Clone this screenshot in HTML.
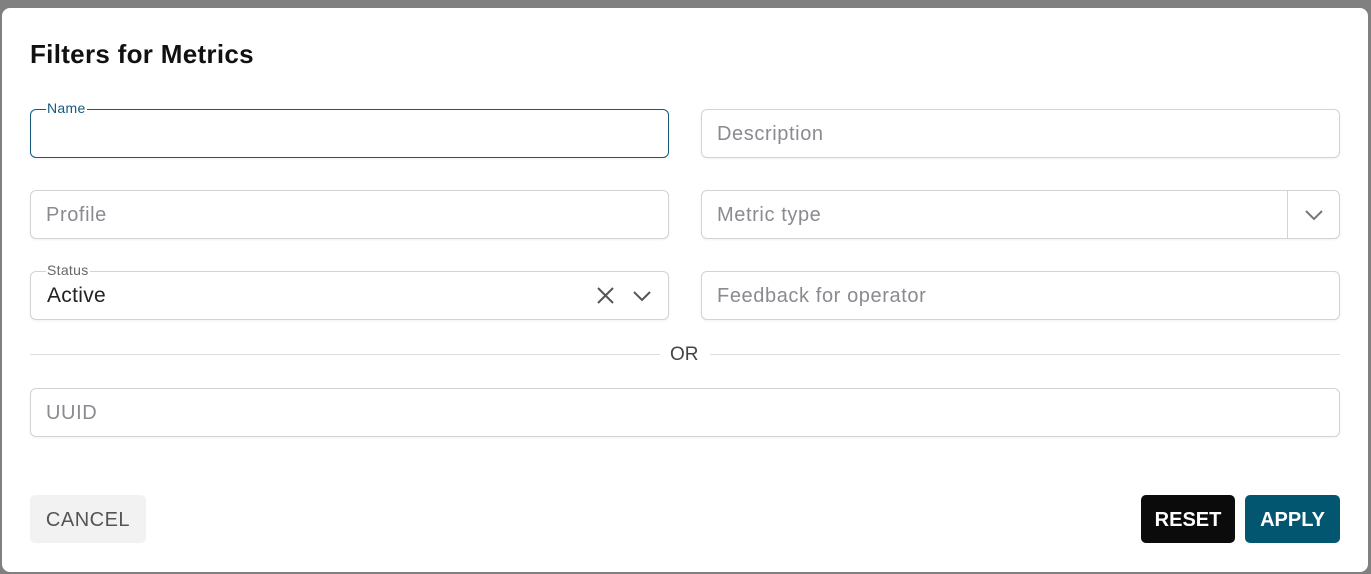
<!DOCTYPE html>
<html><head><style>
body{margin:0;width:1371px;height:574px;background:#808080;position:relative;overflow:hidden;font-family:"Liberation Sans",sans-serif}
.dlg{position:absolute;left:2px;top:8px;width:1366px;height:564px;background:#fff;border-radius:8px}
.f{position:absolute;box-sizing:border-box;border:1px solid #d3d3d6;border-radius:6px;height:49px;box-shadow:0 1px 2px rgba(0,0,0,.06)}
.ph{position:absolute;left:15px;top:13px;font-size:20px;letter-spacing:0.6px;color:#8a8a90}
.lab{position:absolute;top:-10px;left:15px;background:#fff;padding:0 1px;font-size:14px;letter-spacing:0.3px;color:#666}
.btn{position:absolute;top:495px;height:48px;border-radius:5px;font-size:20px;font-weight:bold;display:flex;align-items:center;justify-content:center;padding-top:3px;box-sizing:border-box}
</style></head><body>
<div class="dlg"></div>
<div style="position:absolute;left:30px;top:39px;font-size:26px;font-weight:bold;color:#111;letter-spacing:0.3px">Filters for Metrics</div>

<div class="f" style="left:30px;top:109px;width:639px;border-color:#155a7e"><div class="lab" style="color:#155a7e">Name</div></div>
<div class="f" style="left:701px;top:109px;width:639px"><div class="ph">Description</div></div>

<div class="f" style="left:30px;top:190px;width:639px"><div class="ph">Profile</div></div>
<div class="f" style="left:701px;top:190px;width:639px"><div class="ph">Metric type</div>
<div style="position:absolute;left:585px;top:0;bottom:0;border-left:1px solid #d3d3d6"></div>
<svg style="position:absolute;left:602px;top:17px" width="20" height="14"><path d="M2 3 L10 11 L18 3" fill="none" stroke="#777" stroke-width="2"/></svg></div>

<div class="f" style="left:30px;top:271px;width:639px"><div class="lab">Status</div>
<div style="position:absolute;left:16px;top:12px;font-size:21px;color:#222;letter-spacing:0.3px">Active</div>
<svg style="position:absolute;left:565px;top:14px" width="20" height="20"><path d="M2 2 L17 17 M17 2 L2 17" stroke="#555" stroke-width="2"/></svg>
<svg style="position:absolute;left:601px;top:17px" width="20" height="14"><path d="M2 3 L10 11 L18 3" fill="none" stroke="#555" stroke-width="2"/></svg></div>
<div class="f" style="left:701px;top:271px;width:639px"><div class="ph">Feedback for operator</div></div>

<div style="position:absolute;left:30px;top:354px;width:630px;border-top:1px solid #ddd"></div>
<div style="position:absolute;left:710px;top:354px;width:630px;border-top:1px solid #ddd"></div>
<div style="position:absolute;left:670px;top:344px;font-size:19px;color:#444">OR</div>

<div class="f" style="left:30px;top:388px;width:1310px"><div class="ph">UUID</div></div>

<div class="btn" style="left:30px;width:116px;background:#f2f2f3;color:#555;font-weight:normal;letter-spacing:0.5px">CANCEL</div>
<div class="btn" style="left:1141px;width:94px;background:#0b0b0c;color:#fff">RESET</div>
<div class="btn" style="left:1245px;width:95px;background:#03566f;color:#fff">APPLY</div>
</body></html>
